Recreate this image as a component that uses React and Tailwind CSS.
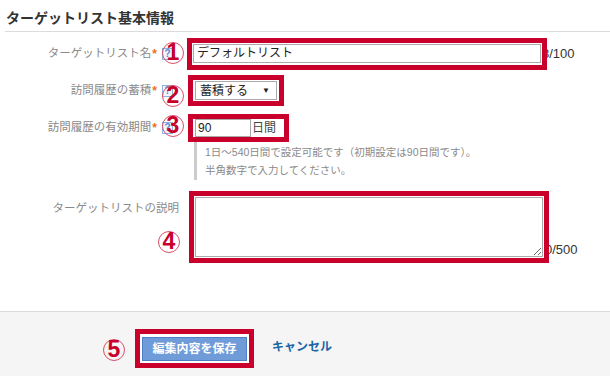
const font = { fontFamily: '"Liberation Sans", "Noto Sans CJK JP", sans-serif' };

function Circle({ n, className }) {
  return (
    <div
      className={`absolute w-[22px] h-[22px] rounded-full border border-[#d9506a] flex items-center justify-center text-[23px] font-bold leading-none text-[#c8002b] ${className}`}
    >
      <span className="-mt-[1px]">{n}</span>
    </div>
  );
}

function Help() {
  return (
    <span className="inline-flex w-[11px] h-[12px] border border-[#8fb0e0] bg-[#f3f7fd] items-center justify-center text-[10px] font-bold leading-none text-[#5a86c9] ml-[5px] mr-[8px]">
      ?
    </span>
  );
}

function Label({ children, required = true }) {
  return (
    <div className="w-[181px] flex items-center justify-end text-[11.5px] leading-none text-[#8a8a8a]">
      <span>{children}</span>
      {required && <span className="text-[#f07020] text-[12px] font-bold ml-[1px]">*</span>}
      {required && <Help />}
    </div>
  );
}

export default function App() {
  return (
    <div className="w-[610px] h-[376px] bg-white flex flex-col overflow-hidden" style={font}>
      {/* header */}
      <div className="ml-[5px] h-[32px] border-b border-[#dcdcdc] flex items-center pl-[1px] pt-[4px]">
        <h1 className="text-[14px] font-bold text-[#333] leading-none">ターゲットリスト基本情報</h1>
      </div>

      {/* row 1 */}
      <div className="relative flex items-center mt-[6px]">
        <Label>ターゲットリスト名</Label>
        <div className="relative z-10 ml-[6px] border-[5px] border-[#c8002b] px-[1px] pt-[1px] pb-[2px]">
          <div className="w-[348px] h-[19px] border border-[#aaa] bg-white text-[12px] leading-[17px] text-[#222] px-[3px]">
            デフォルトリスト
          </div>
        </div>
        <span className="-ml-[5px] text-[13px] text-[#333]">8/100</span>
        <Circle n="1" className="left-[162px] top-[4px]" />
      </div>

      {/* row 2 */}
      <div className="relative flex items-center mt-[5px]">
        <Label>訪問履歴の蓄積</Label>
        <div className="ml-[7px] border-[5px] border-[#c8002b] px-[2px] py-[1px]">
          <div className="w-[82px] h-[19px] border border-[#aaa] bg-white flex items-center justify-between pl-[4px] pr-[6px] text-[12px] text-[#222]">
            <span className="leading-none">蓄積する</span>
            <span className="text-[8px] leading-none">▼</span>
          </div>
        </div>
        <Circle n="2" className="left-[162px] top-[10px]" />
      </div>

      {/* row 3 */}
      <div className="relative flex items-center mt-[8px]">
        <Label>訪問履歴の有効期間</Label>
        <div className="ml-[7px] border-[5px] border-[#c8002b] pl-[2px] pr-[8px] py-0 flex items-center">
          <div className="w-[56px] h-[18px] border border-[#aaa] bg-white text-[12px] leading-[16px] text-[#222] px-[2px]">
            90
          </div>
          <span className="ml-[1px] text-[12px] leading-none text-[#444]">日間</span>
        </div>
        <Circle n="3" className="left-[162px] top-[1px]" />
      </div>

      {/* hint */}
      <div className="ml-[194px] border-l-[3px] border-[#ccc] pl-[8px] pt-[1px] pb-[1px] text-[10.5px] leading-[18px] text-[#8a8a8a]">
        <p>1日～540日間で設定可能です（初期設定は90日間です）。</p>
        <p>半角数字で入力してください。</p>
      </div>

      {/* row 4 */}
      <div className="relative flex items-end mt-[11px]">
        <div className="w-[181px] self-start pt-[12px] pr-[2px] text-right text-[11.5px] leading-none text-[#8a8a8a]">
          ターゲットリストの説明
        </div>
        <div className="relative z-10 ml-[8px] border-[5px] border-[#c8002b] px-[1px] py-[1px]">
          <textarea
            className="block w-[348px] h-[60px] border border-[#aaa] bg-white outline-none"
            defaultValue=""
          />
        </div>
        <span className="-ml-[4px] mb-[4px] text-[13px] text-[#333]">0/500</span>
        <Circle n="4" className="left-[158px] top-[40px]" />
      </div>

      <div className="flex-1" />

      {/* footer */}
      <div className="h-[65px] border-t border-[#dcdcdc] bg-[#f5f5f5] flex items-start pt-[17px] pl-[103px]">
        <div className="relative w-[22px] h-[38px] mr-[10px]">
          <Circle n="5" className="left-0 top-[10px]" />
        </div>
        <div className="border-[5px] border-[#c8002b] p-[2px] bg-white">
          <button className="w-[105px] h-[24px] bg-[#6f9bd9] border border-[#4f80c6] text-white text-[12px] font-bold leading-none">
            編集内容を保存
          </button>
        </div>
        <a className="ml-[18px] mt-[12px] text-[12px] font-bold leading-none text-[#1b65a6]">キャンセル</a>
      </div>
    </div>
  );
}
